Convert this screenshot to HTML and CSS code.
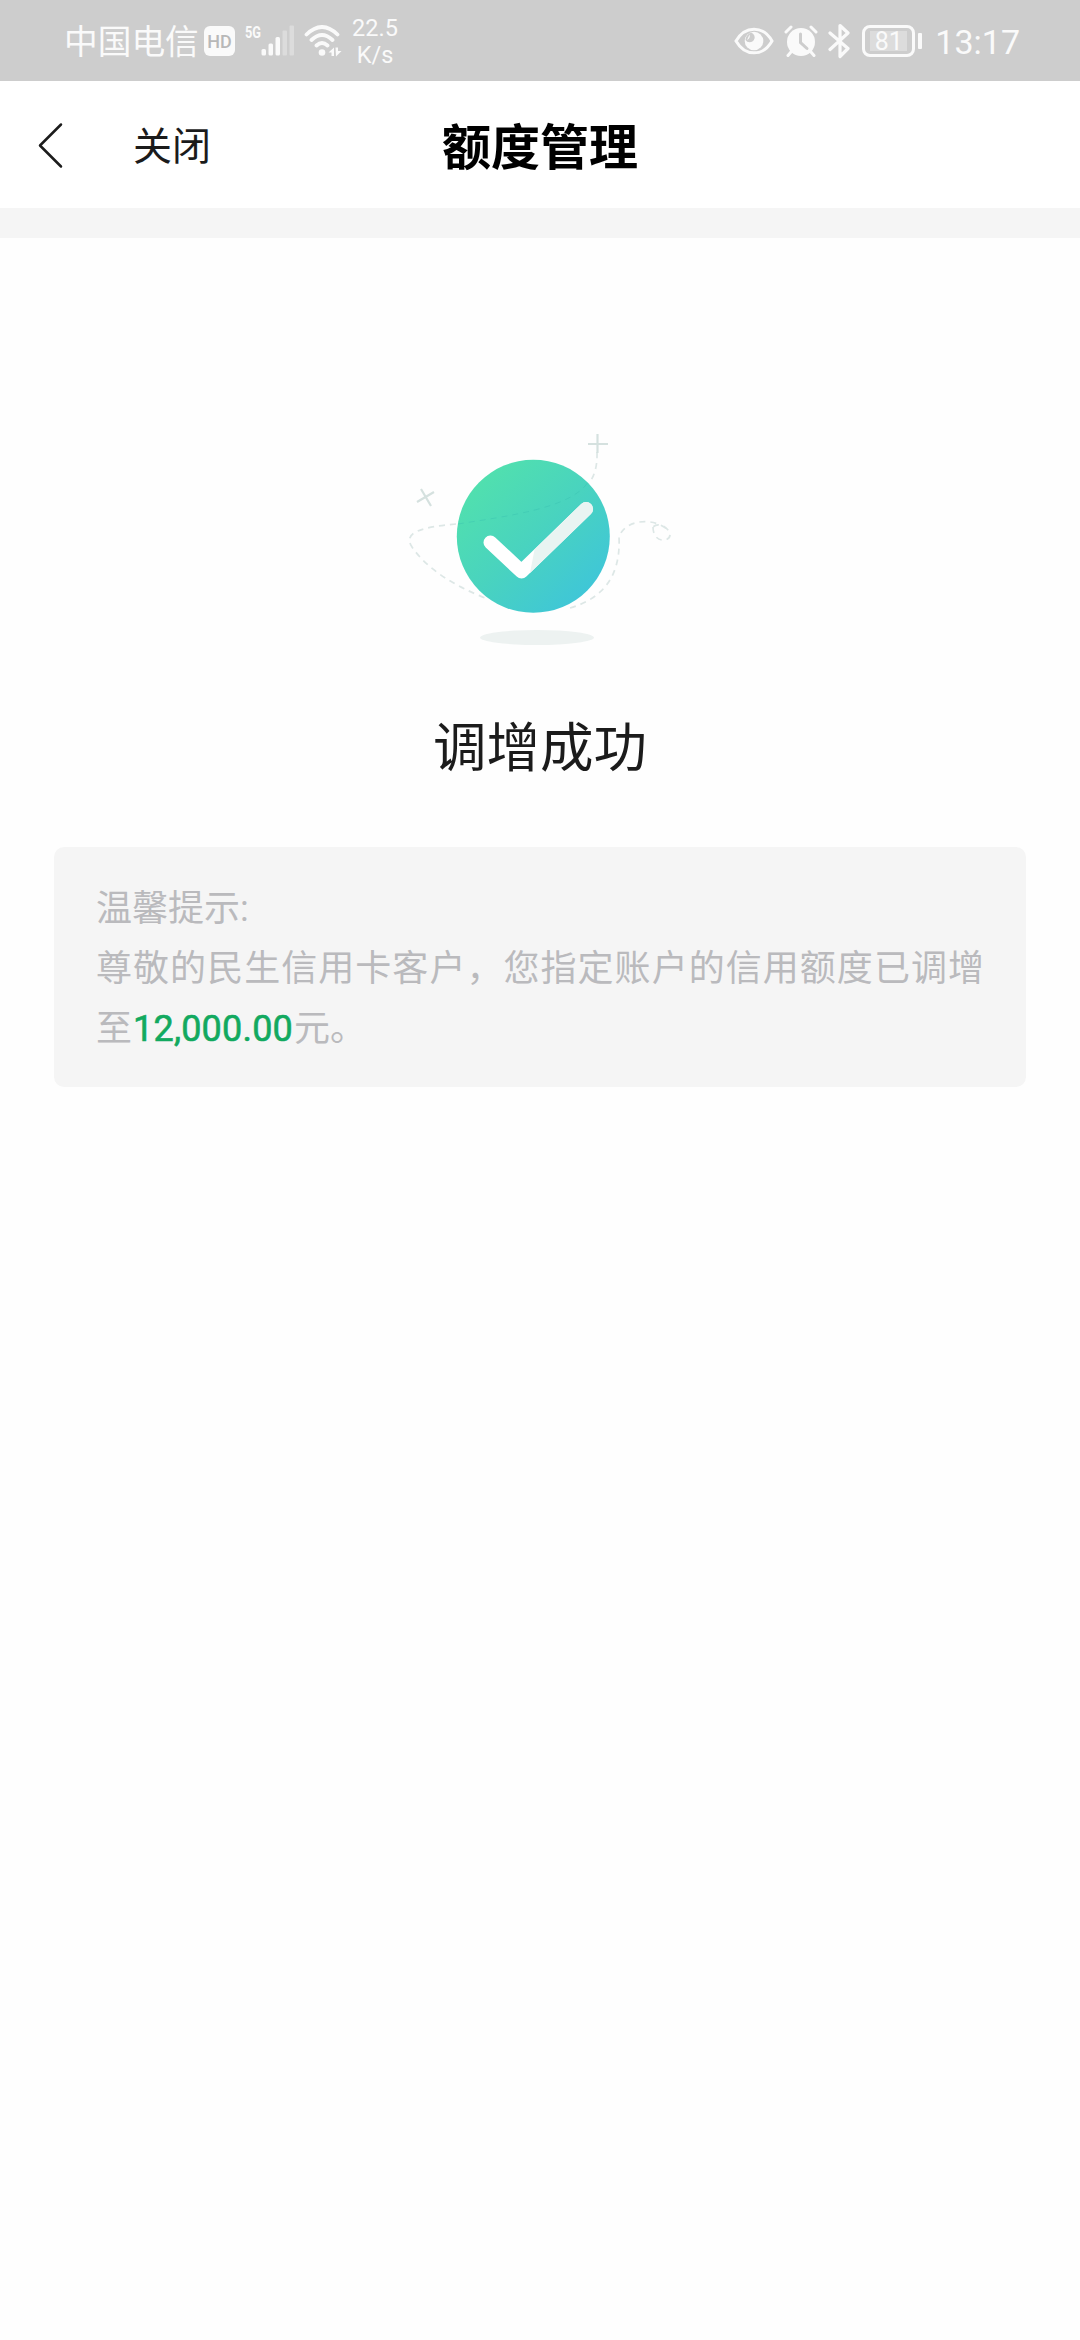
FILE: index.html
```html
<!DOCTYPE html>
<html lang="zh-CN">
<head>
<meta charset="utf-8">
<title>额度管理</title>
<link rel="stylesheet" href="styles.css">
</head>
<body>
<div class="status">
  <span class="carrier">中国电信</span>
  <span class="hd">HD</span>
  <div class="signal">
    <span class="net">5G</span>
    <svg width="34" height="31" viewBox="0 0 34 31" fill="#fafafa">
      <rect x="0.5" y="24" width="4.5" height="6.5" rx="1.5"/>
      <rect x="7.5" y="18.500" width="4.500" height="12" rx="1.5"/>
      <rect x="14.500" y="12" width="4.500" height="18.500" rx="1.5"/>
      <rect x="21.500" y="5.500" width="4.500" height="25" rx="1" opacity=".35"/>
      <rect x="28.500" y="0.500" width="4.500" height="30" rx="1" opacity=".35"/>
    </svg>
  </div>
  <svg class="wifi" width="38" height="32" viewBox="0 0 38 32" fill="none" stroke="#fafafa" stroke-width="3.800" stroke-linecap="round">
    <path d="M2.500 9.500Q18 -5.500 33.500 9.500M7.500 15Q18 5 28.500 15M12.500 20.500Q18 15.500 23.500 20.500"/>
    <circle cx="18" cy="27.500" r="3.300" fill="#fafafa" stroke="none"/>
    <path d="M24.500 27.500L30 22.500V31H27.500V27.500ZM31.500 22.500H34V26H37.500L32 31.500Z" fill="#fafafa" stroke="none"/>
  </svg>
  <div class="speed"><span>22.5</span><span>K/s</span></div>
  <div class="right">
    <svg width="40" height="28" viewBox="0 0 40 28">
      <path d="M2 14C11 -1.800 29 -1.800 38 14C29 29.800 11 29.800 2 14Z" fill="none" stroke="#fafafa" stroke-width="3"/>
      <circle cx="20" cy="14" r="9.300" fill="#fafafa"/>
      <path d="M17 5.500A5 5 0 1 1 11.500 13A9 9 0 0 1 17 5.500Z" fill="#cdcdcd"/>
      <path d="M15.500 7.500A4.500 4.500 0 0 1 13 13Z" fill="#fafafa"/>
    </svg>
    <svg class="alarm" width="34" height="34" viewBox="0 0 34 34" fill="none" stroke="#fafafa" stroke-width="3" stroke-linecap="round">
      <circle cx="17" cy="18" r="14" fill="#fafafa" stroke="none"/>
      <path d="M2 8L7 3M27 3L32 8M7 28L4 31.500M27 28L30 31.500"/>
      <path d="M16.500 10V18.500L23 24.500" stroke="#cdcdcd" stroke-width="3"/>
    </svg>
    <svg class="bt" width="22" height="36" viewBox="0 0 22 36" fill="none" stroke="#fafafa" stroke-width="3.200" stroke-linejoin="round" stroke-linecap="round">
      <path d="M2 10L20 25.500L12 33.500V2.500L20 10L2 26.500"/>
    </svg>
    <div class="battery"><span>81</span></div>
    <i class="nub"></i>
    <span class="time">13:17</span>
  </div>
</div>
<header class="nav">
  <svg class="back" width="27" height="48" viewBox="0 0 27 48" fill="none" stroke="#1b1b1b" stroke-width="2.500" stroke-linecap="round" stroke-linejoin="round"><path d="M24 3.500L3 24.500L24 45.500"/></svg>
  <span class="close">关闭</span>
  <h1>额度管理</h1>
</header>
<main>
  <svg class="success" width="300" height="240" viewBox="0 0 300 240" fill="none">
    <defs>
      <linearGradient id="disc" x1=".15" y1=".12" x2=".87" y2=".87">
        <stop offset="0" stop-color="#51e0ae"/><stop offset=".5" stop-color="#49d3bf"/><stop offset="1" stop-color="#3fc6d8"/>
      </linearGradient>
    </defs>
    <g stroke="#dde7e6" stroke-width="1.700" stroke-dasharray="6 5">
      <path d="M207 32C208 63 193 79 148 88"/>
      <path d="M66 104C33 107 12 112 22 127C37 149 63 165 95 178"/>
      <path d="M180 188C211 179 231 158 229 117C235 99 264 97 278 110M263 107C263 127 287 121 278 110C274 105 267 103 263 107"/>
    </g>
    <g stroke="#d5e1df" stroke-width="2.200">
      <path d="M198 24H218M207.500 14V33M27 82L44 72M31 69L41 86"/>
    </g>
    <circle cx="143.300" cy="116.300" r="76.500" fill="url(#disc)"/>
    <path d="M68 104C118 96 182 88 198 62" stroke="#36bfb0" stroke-opacity=".4" stroke-dasharray="6 5"/>
    <path d="M100.500 122.500L131.500 151.500L196 89" stroke="#fff" stroke-width="14" stroke-linecap="round" stroke-linejoin="round"/>
    <path d="M144.500 129.800L191.200 83.900A7 7 0 0 1 201 94L140 153Z" fill="#e9f4f2"/>
    <ellipse cx="147" cy="217.500" rx="57" ry="7.500" fill="#edf2f1"/>
  </svg>
  <h2>调增成功</h2>
  <section class="tip">
    <p>温馨提示:</p>
    <p>尊敬的民生信用卡客户，您指定账户的信用额度已调增至<b>12,000.00</b>元。</p>
  </section>
</main>
</body>
</html>
```
FILE: styles.css
```css
* { box-sizing: border-box; margin: 0; padding: 0; }
body {
  width: 1080px;
  min-height: 2340px;
  background: #fefefe;
  font-family: Roboto, "Noto Sans CJK SC", sans-serif;
}
svg { display: block; flex: none; }
.status {
  display: flex;
  align-items: center;
  height: 81px;
  padding: 0 60px 0 64px;
  background: #cdcdcd;
  color: #fafafa;
  white-space: nowrap;
}
.carrier { width: 135px; padding-top: 5px; font-size: 33.7px; line-height: 50px; }
.hd {
  width: 31px;
  height: 30px;
  margin-left: 5px;
  border-radius: 6px;
  background: #fafafa;
  color: #b8b8b8;
  font-size: 18px;
  font-weight: 500;
  line-height: 31px;
  text-align: center;
}
.signal { display: flex; width: 50px; height: 31px; margin-left: 10px; }
.net {
  width: 16px;
  font: 700 17px/14px Roboto, sans-serif;
  transform: scaleX(.75);
  transform-origin: left;
  align-self: flex-start;
}
.wifi { margin-left: 9px; }
.speed {
  display: flex;
  flex-direction: column;
  width: 46px;
  margin-left: 10px;
  padding-top: 2px;
  font-size: 23.5px;
  line-height: 27px;
  text-align: center;
}
.right { display: flex; align-items: center; margin-left: auto; }
.alarm { margin-left: 10px; }
.bt { margin-left: 10px; }
.battery {
  width: 53px;
  height: 32px;
  margin-left: 12px;
  padding: 3px 5px;
  border: 3px solid #fafafa;
  border-radius: 8px;
}
.battery span {
  display: block;
  width: 37px;
  height: 20px;
  background: #dcdcdc;
  font-size: 25px;
  line-height: 21px;
  text-align: center;
}
.nub { width: 4px; height: 16px; margin-left: 3px; border-radius: 1px; background: #fafafa; }
.time { margin-left: 13px; padding-top: 3px; font-size: 34px; line-height: 40px; }
.nav {
  display: grid;
  grid-template-columns: 97px 1fr auto 1fr 97px;
  align-items: center;
  height: 127px;
  background: #fff;
}
.back { margin-left: 37px; }
.close { padding: 5px 0 0 36px; color: #1b1b1b; font-size: 39px; line-height: 56px; }
.nav h1 { padding-top: 8px; color: #000; font-size: 49px; line-height: 70px; }
main {
  display: flex;
  flex-direction: column;
  align-items: center;
  border-top: 30px solid #f5f5f5;
}
.success { margin: 182px 0 0; }
h2 { margin-top: 50px; color: #1b1b1b; font-size: 53.5px; font-weight: 400; line-height: 78px; }
.tip {
  width: 972px;
  height: 240px;
  margin-top: 59px;
  padding: 32px 42px 28px;
  border-radius: 10px;
  background: #f5f5f5;
  color: #bababd;
  font-size: 36px;
  line-height: 60px;
  text-align: justify;
}
.tip b {
  margin: 0 1px;
  color: #12a95f;
  font-weight: 400;
  letter-spacing: .2px;
  -webkit-text-stroke: .6px #12a95f;
}
```
